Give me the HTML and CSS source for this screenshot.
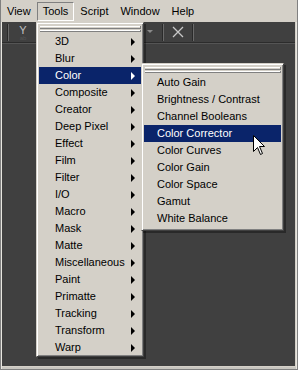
FILE: index.html
```html
<!DOCTYPE html>
<html>
<head>
<meta charset="utf-8">
<link rel="stylesheet" href="styles.css">
</head>
<body>
<div class="window">
  <div class="menubar">
    <span class="mi">View</span>
    <span class="mi active">Tools</span>
    <span class="mi">Script</span>
    <span class="mi">Window</span>
    <span class="mi">Help</span>
  </div>
  <div class="workspace">
    <div class="toolbar">
      <span class="sep first"></span>
      <span class="ytool"><span class="yglyph">Y</span><small>ab</small></span>
      <span class="spacer"></span>
      <span class="drop"></span>
      <span class="sep"></span>
      <svg class="xicon" width="12" height="12" viewBox="0 0 12 12"><path d="M1 1 L11 11 M11 1 L1 11" stroke="#c8c8c8" stroke-width="1.3" fill="none"/></svg>
      <span class="sep last"></span>
    </div>
  </div>

  <div class="menu tools">
    <div class="tear"></div>
    <div class="item sub">3D</div>
    <div class="item sub">Blur</div>
    <div class="item sub hl">Color</div>
    <div class="item sub">Composite</div>
    <div class="item sub">Creator</div>
    <div class="item sub">Deep Pixel</div>
    <div class="item sub">Effect</div>
    <div class="item sub">Film</div>
    <div class="item sub">Filter</div>
    <div class="item sub">I/O</div>
    <div class="item sub">Macro</div>
    <div class="item sub">Mask</div>
    <div class="item sub">Matte</div>
    <div class="item sub">Miscellaneous</div>
    <div class="item sub">Paint</div>
    <div class="item sub">Primatte</div>
    <div class="item sub">Tracking</div>
    <div class="item sub">Transform</div>
    <div class="item sub">Warp</div>
  </div>

  <div class="menu color">
    <div class="tear"></div>
    <div class="item">Auto Gain</div>
    <div class="item">Brightness / Contrast</div>
    <div class="item">Channel Booleans</div>
    <div class="item hl">Color Corrector</div>
    <div class="item">Color Curves</div>
    <div class="item">Color Gain</div>
    <div class="item">Color Space</div>
    <div class="item">Gamut</div>
    <div class="item">White Balance</div>
  </div>

  <svg class="cursor" width="13" height="21" viewBox="0 0 13 21">
    <path d="M0.5 0.5 L0.5 16.5 L4.5 12.5 L7.5 19.5 L9.5 18.5 L6.5 11.5 L11.5 11.5 Z" fill="#fff" stroke="#000" stroke-width="1"/>
  </svg>
</div>
</body>
</html>
```

FILE: styles.css
```css
* { box-sizing: border-box; }
html, body {
  margin: 0;
  padding: 0;
  background: #404040;
}
body {
  font-family: Tahoma, "Liberation Sans", Arial, sans-serif;
  font-size: 11px;
  color: #000;
}
.window {
  position: relative;
  width: 298px;
  height: 370px;
  display: flex;
  flex-direction: column;
  background: #d4d0c8;
  border-left: 1px solid #808080;
  border-right: 1px solid #808080;
  border-bottom: 1px solid #808080;
  box-shadow: inset 1px 0 0 #e8e6e0, inset -1px 0 0 #e8e6e0, inset 0 -2px 0 #c8c6c0;
  overflow: hidden;
}
.menubar {
  height: 22px;
  display: flex;
  align-items: center;
  background: #d4d0c8;
}
.mi {
  padding: 2px 5px 2px 5px;
  line-height: 13px;
  border: 1px solid transparent;
}
.mi.active {
  border-color: #808080 #ffffff #ffffff #808080;
}
.workspace {
  flex: 1;
  margin: 0 2px 3px 1px;
  background: #404040;
  display: flex;
  flex-direction: column;
}
.toolbar {
  height: 21px;
  display: flex;
  align-items: center;
  border-bottom: 1px solid #2c2c2c;
  box-shadow: 0 1px 0 #555;
  padding-left: 5px;
}
.sep {
  width: 2px;
  height: 17px;
  border-left: 1px solid #2a2a2a;
  border-right: 1px solid #6a6a6a;
  margin: 0 7px;
}
.sep.first { margin: 0 9px 0 0; }
.sep.last { margin-right: 101px; }
.ytool {
  display: flex;
  flex-direction: column;
  align-items: center;
  width: 10px;
  margin-top: 1px;
}
.yglyph {
  color: #c0c0c0;
  font-size: 11px;
  line-height: 10px;
}
.ytool small {
  font-size: 6px;
  line-height: 6px;
  color: #555;
}
.spacer { flex: 1; }
.drop {
  width: 0;
  height: 0;
  border-left: 3px solid transparent;
  border-right: 3px solid transparent;
  border-top: 3px solid #8a8a8a;
  margin-right: 2px;
  margin-top: -2px;
}
.xicon { margin: 0 1px; }

.menu {
  position: absolute;
  background: #d4d0c8;
  border: 1px solid;
  border-color: #d4d0c8 #404040 #404040 #d4d0c8;
  box-shadow: inset 1px 1px 0 #ffffff, inset -1px -1px 0 #808080, 2px 2px 0 rgba(0,0,0,0.35);
  padding: 2px;
  display: flex;
  flex-direction: column;
}
.menu.tools {
  left: 35px;
  top: 22px;
  width: 108px;
  height: 335px;
}
.menu.color {
  left: 140px;
  top: 63px;
  width: 143px;
  height: 168px;
}
.tear {
  height: 8px;
  margin: 0 1px;
  padding-top: 1px;
  display: flex;
  flex-direction: column;
}
.tear::before, .tear::after {
  content: "";
  display: block;
  height: 2px;
  border-top: 1px solid #ffffff;
  border-bottom: 1px solid #808080;
  margin-bottom: 1px;
  box-shadow: 1px 0 0 #808080;
}
.item {
  position: relative;
  height: 17px;
  line-height: 17px;
  padding-left: 16px;
  white-space: nowrap;
}
.menu.color .item { padding-left: 13px; }
.item.sub::after {
  content: "";
  position: absolute;
  right: 6px;
  top: 5px;
  width: 0;
  height: 0;
  border-top: 4px solid transparent;
  border-bottom: 4px solid transparent;
  border-left: 4px solid #000;
}
.item.hl {
  background: #0a246a;
  color: #ffffff;
}
.item.hl.sub::after { border-left-color: #ffffff; }
.cursor {
  position: absolute;
  left: 252px;
  top: 135px;
}
```
